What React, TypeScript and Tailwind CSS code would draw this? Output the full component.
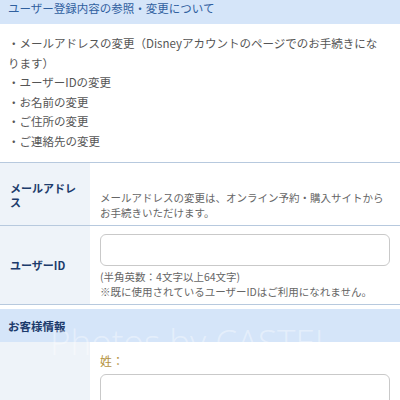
const listItems = [
  '・メールアドレスの変更（Disneyアカウントのページでのお手続きにな',
  'ります）',
  '・ユーザーIDの変更',
  '・お名前の変更',
  '・ご住所の変更',
  '・ご連絡先の変更',
];

export default function App() {
  return (
    <div
      className="relative w-[400px] h-[400px] overflow-hidden bg-white"
      style={{ fontFamily: '"Noto Sans CJK JP", "Noto Sans", sans-serif' }}
    >
      {/* Page header */}
      <div className="h-[24px] bg-[#d5e5f9] px-2">
        <p className="text-[11.5px] leading-[16px] text-[#30609f]">ユーザー登録内容の参照・変更について</p>
      </div>

      {/* What can be changed */}
      <div className="px-2 pt-[10px] pb-[11px]">
        {listItems.map((item) => (
          <p key={item} className="text-[11.5px] leading-[19.5px] text-[#555] whitespace-nowrap">
            {item}
          </p>
        ))}
      </div>

      {/* Mail address row */}
      <div className="flex border-t border-[#b7c9de]">
        <div className="w-[90px] shrink-0 bg-[#eef3f9] px-[10px] flex items-center">
          <p className="text-[11px] leading-[14px] font-bold text-[#1c3b6c] pt-[2px]">
            メールアドレ
            <br />ス
          </p>
        </div>
        <div className="flex-1 pl-[10px] pr-[10px] pt-[27px] pb-[5px]">
          <p className="text-[10.5px] leading-[15px] text-[#666] whitespace-nowrap">
            メールアドレスの変更は、オンライン予約・購入サイトから
          </p>
          <p className="text-[10.5px] leading-[15px] text-[#666]">お手続きいただけます。</p>
        </div>
      </div>

      {/* User ID row */}
      <div className="flex border-t border-b border-[#b7c9de]">
        <div className="w-[90px] shrink-0 bg-[#eef3f9] px-[10px] flex items-center">
          <p className="text-[11px] leading-[14px] font-bold text-[#1c3b6c]">ユーザーID</p>
        </div>
        <div className="flex-1 pl-[10px] pr-[10px] pt-[8px] pb-[5px]">
          <input
            type="text"
            className="block w-[290px] h-[32px] rounded-[6px] border border-[#c9c9c9] bg-white"
          />
          <div className="mt-[3px]">
            <p className="text-[10.5px] leading-[15px] text-[#666]">(半角英数：4文字以上64文字)</p>
            <p className="text-[10.5px] leading-[15px] text-[#666] whitespace-nowrap">
              ※既に使用されているユーザーIDはご利用になれません。
            </p>
          </div>
        </div>
      </div>

      {/* Customer info section */}
      <div className="mt-[4px] h-[33px] bg-[#d5e5f9] px-2 flex items-center">
        <p className="text-[11.5px] font-bold text-[#1c3b6c] pt-[2px]">お客様情報</p>
      </div>

      <div className="flex">
        <div className="w-[90px] shrink-0 bg-[#eef3f9] h-[80px]" />
        <div className="flex-1 pl-[10px] pt-[11px]">
          <p className="text-[12px] leading-[16px] text-[#b5933f]">姓：</p>
          <input
            type="text"
            className="block mt-[5px] w-[290px] h-[40px] rounded-[6px] border border-[#c9c9c9] bg-white"
          />
        </div>
      </div>

      {/* Watermark */}
      <div className="absolute left-[50px] top-[324px] pointer-events-none">
        <span
          className="text-[35px] leading-none font-light text-white/40 whitespace-nowrap"
          style={{ fontFamily: '"Open Sans", sans-serif' }}
        >
          Photos by CASTEL
        </span>
      </div>
    </div>
  );
}
